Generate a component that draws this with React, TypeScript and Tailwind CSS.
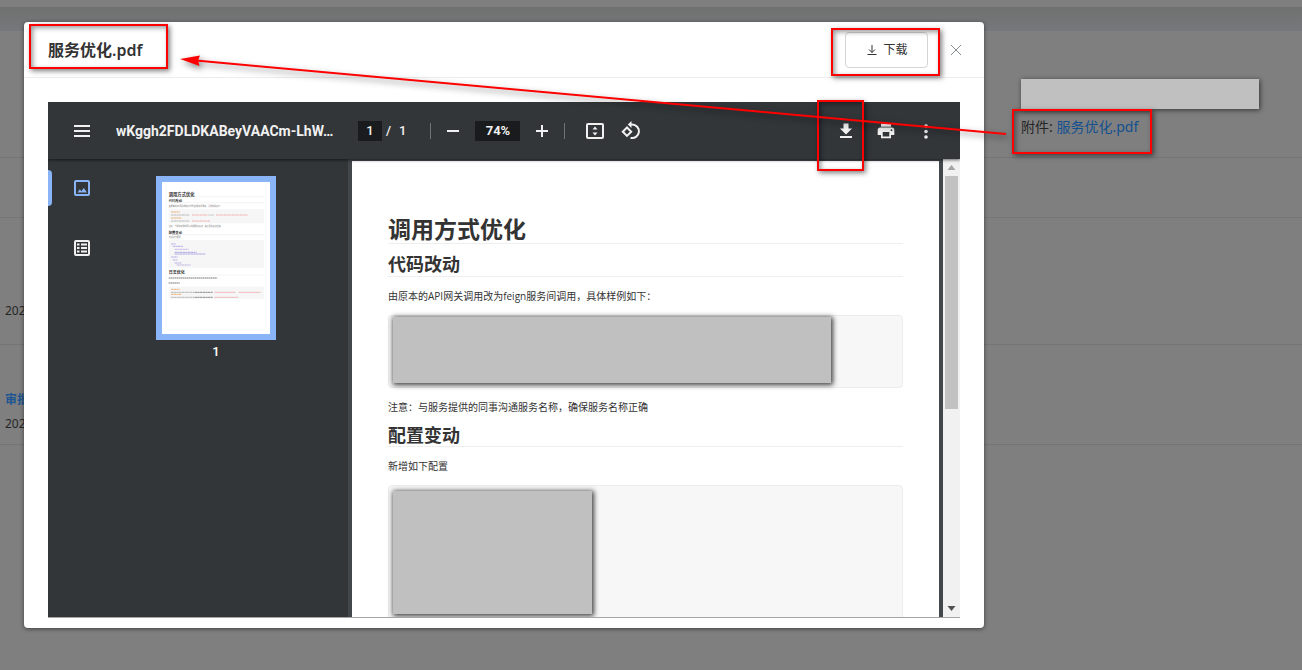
import { ReactNode } from 'react';

const UI_FONT = 'font-["Noto_Sans","Noto_Sans_CJK_SC",sans-serif]';

// 缩略图里的代码行: x, y, 宽度, 颜色
const thumbCode = [
  [27, 90, 26, '#e8b27c'],
  [27, 99, 56, '#b9b9b9'],
  [90, 99, 46, '#efb3b3'],
  [139, 99, 18, '#c5c5c5'],
  [162, 99, 96, '#efb3b3'],
  [27, 108, 32, '#e8b27c'],
  [27, 117, 56, '#b9b9b9'],
  [90, 117, 54, '#efb3b3'],
  [27, 186, 14, '#b7ade6'],
  [32, 193, 32, '#b7ade6'],
  [38, 202, 42, '#c9b9e6'],
  [38, 211, 66, '#ada5e2'],
  [38, 216, 92, '#ada5e2'],
  [27, 225, 20, '#b7ade6'],
  [32, 234, 14, '#b7ade6'],
  [38, 243, 20, '#b7ade6'],
  [44, 249, 42, '#c0b6e2'],
  [27, 322, 26, '#e8b27c'],
  [27, 331, 70, '#b9b9b9'],
  [98, 331, 54, '#8d8d8d'],
  [158, 331, 62, '#efb3b3'],
  [230, 331, 66, '#efb3b3'],
  [27, 337, 32, '#e8b27c'],
  [27, 346, 70, '#b9b9b9'],
  [98, 346, 54, '#8d8d8d'],
  [158, 346, 70, '#efb3b3'],
] as const;

function Thumbnail() {
  return (
    <svg viewBox="0 0 324 456" className='block w-full bg-white font-["Noto_Sans_CJK_SC",sans-serif]' aria-hidden="true">
      <g fill="#f6f6f6">
        <rect x="20" y="81" width="286" height="43" />
        <rect x="20" y="174" width="286" height="84" />
        <rect x="20" y="314" width="286" height="37" />
      </g>
      <g stroke="#eeeeee" strokeWidth="2">
        <path d="M20 44H306M20 62H306M20 158H306M20 279H306" />
      </g>
      <g fill="#333" fontWeight="700">
        <text x="20" y="41" fontSize="13">调用方式优化</text>
        <text x="20" y="59" fontSize="10">代码改动</text>
        <text x="20" y="155" fontSize="10">配置变动</text>
        <text x="20" y="275" fontSize="12">日志优化</text>
      </g>
      <g fill="#777" fontSize="6">
        <text x="20" y="74">由原本的API网关调用改为feign服务间调用，具体样例如下：</text>
        <text x="20" y="136">注意：与服务提供的同事沟通服务名称，确保服务名称正确</text>
        <text x="20" y="167">新增如下配置</text>
      </g>
      <g stroke="#a8a8a8" strokeWidth="4" strokeDasharray="5 1">
        <path d="M20 288H166M20 303H53" />
      </g>
      {thumbCode.map(([x, y, w, color], index) => (
        <path key={index} d={`M${x} ${y}h${w}`} stroke={color} strokeWidth="3" strokeDasharray="7 1" />
      ))}
    </svg>
  );
}

function ToolButton({ label, children }: { label: string; children: ReactNode }) {
  return (
    <button aria-label={label} className="flex size-5 items-center justify-center text-[#f1f1f1]">
      {children}
    </button>
  );
}

function Toolbar() {
  return (
    <div className='relative z-10 flex h-[57px] shrink-0 items-center bg-[#323639] px-6 font-["Roboto",sans-serif] text-[13px] font-medium text-[#f1f1f1] shadow-[0_1px_3px_rgba(0,0,0,0.6)]'>
      <ToolButton label="菜单">
        <svg width="20" height="20" viewBox="0 0 20 20" fill="currentColor" aria-hidden="true">
          <path d="M2 4h16v2H2zM2 9h16v2H2zM2 14h16v2H2z" />
        </svg>
      </ToolButton>
      <span className="ml-6 w-[218px] truncate text-sm font-bold">wKggh2FDLDKABeyVAACm-LhW...</span>
      <div className="ml-6 flex items-center">
        <input aria-label="页码" defaultValue="1" className="h-5 w-6 bg-[#191b1c] text-center" />
        <span className="ml-1">/</span>
        <span className="ml-2">1</span>
      </div>
      <span className="ml-6 h-4 w-px bg-[#707376]" />
      <div className="ml-3 flex items-center gap-3">
        <ToolButton label="缩小">
          <svg width="20" height="20" viewBox="0 0 20 20" fill="currentColor" aria-hidden="true">
            <path d="M4 9h12v2H4z" />
          </svg>
        </ToolButton>
        <input aria-label="缩放比例" defaultValue="74%" className="h-5 w-[45px] bg-[#191b1c] text-center font-bold" />
        <ToolButton label="放大">
          <svg width="20" height="20" viewBox="0 0 20 20" fill="currentColor" aria-hidden="true">
            <path d="M4 9h5V4h2v5h5v2h-5v5H9v-5H4z" />
          </svg>
        </ToolButton>
      </div>
      <span className="ml-3 h-4 w-px bg-[#707376]" />
      <div className="ml-5 flex items-center gap-4">
        <ToolButton label="适合页面大小">
          <svg width="20" height="20" viewBox="0 0 20 20" aria-hidden="true">
            <rect x="2" y="3" width="16" height="14" rx="1" fill="none" stroke="currentColor" strokeWidth="2" />
            <path d="M10 5.500 12.500 8.500h-5zM10 14.500l2.500-3h-5z" fill="currentColor" />
          </svg>
        </ToolButton>
        <ToolButton label="逆时针旋转">
          <svg width="20" height="20" viewBox="0 0 20 20" fill="none" stroke="currentColor" strokeWidth="2" aria-hidden="true">
            <path d="m6 6.500 4.200 4.200L6 14.900l-4.200-4.200z" />
            <path d="M9 3.500h2a6.800 6.800 0 1 1-1.500 13.400" />
            <path d="M10.500 0v7L6.800 3.500z" fill="currentColor" stroke="none" />
          </svg>
        </ToolButton>
      </div>
      <div className="ml-auto flex items-center gap-5">
        <ToolButton label="下载">
          <svg width="20" height="20" viewBox="0 0 20 20" fill="currentColor" aria-hidden="true">
            <path d="M7.500 2.500h5v5H16l-6 6-6-6h3.500zM4 15h12v2H4z" />
          </svg>
        </ToolButton>
        <ToolButton label="打印">
          <svg width="20" height="20" viewBox="0 0 20 20" fill="currentColor" aria-hidden="true">
            <path d="M5 2.500h10v3.200H5z" />
            <path fillRule="evenodd" d="M4.200 6.500h11.600A2.500 2.500 0 0 1 18.300 9v5H15v3.300H5V14H1.700V9a2.500 2.500 0 0 1 2.500-2.500zM6.700 11v4.600h6.600V11zM15.500 8.300a.9.9 0 1 0 0 1.800.9.9 0 0 0 0-1.800z" />
          </svg>
        </ToolButton>
        <ToolButton label="更多">
          <svg width="20" height="20" viewBox="0 0 20 20" fill="currentColor" aria-hidden="true">
            <circle cx="10" cy="5" r="1.800" />
            <circle cx="10" cy="10.500" r="1.800" />
            <circle cx="10" cy="16" r="1.800" />
          </svg>
        </ToolButton>
      </div>
    </div>
  );
}

function Sidebar() {
  return (
    <aside className="flex w-[300px] shrink-0 bg-[#323639]">
      <div className="flex w-[68px] flex-col gap-6 pt-[11px]">
        <button aria-label="缩略图" className="flex h-9 items-center text-[#8ab4f8]">
          <span className="h-9 w-1 rounded-r bg-[#8ab4f8]" />
          <svg className="ml-5" width="20" height="20" viewBox="0 0 20 20" aria-hidden="true">
            <rect x="3" y="3" width="14" height="14" rx="1" fill="none" stroke="currentColor" strokeWidth="2" />
            <path d="m5.500 14.500 2.300-3.200 1.600 1.900 2.400-3.200 3.200 4.500z" fill="currentColor" />
          </svg>
        </button>
        <button aria-label="文档大纲" className="flex h-9 items-center pl-6 text-[#f1f1f1]">
          <svg width="20" height="20" viewBox="0 0 20 20" aria-hidden="true">
            <rect x="3" y="3" width="14" height="14" rx="1" fill="none" stroke="currentColor" strokeWidth="2" />
            <path d="M5 5.500h2.500v2H5zM5 9h2.500v2H5zM5 12.500h2.500v2H5zM9 5.500h6v2H9zM9 9h6v2H9zM9 12.500h6v2H9z" fill="currentColor" />
          </svg>
        </button>
      </div>
      <div className="ml-10 flex w-[120px] flex-col items-center pt-[17px]">
        <button aria-label="第 1 页" className="w-full border-6 border-[#8ab4f8]">
          <Thumbnail />
        </button>
        <span className='mt-1 font-["Roboto",sans-serif] text-[13px] font-medium leading-4 text-white'>1</span>
      </div>
    </aside>
  );
}

function CodeBlock({ className, children }: { className: string; children: ReactNode }) {
  return <div className={`rounded-sm border border-[#ececec] bg-[#f7f7f7] px-1 ${className}`}>{children}</div>;
}

function PdfPage() {
  return (
    <article className='min-w-0 flex-1 bg-white px-9 pt-[54px] font-["Open_Sans","Noto_Sans_CJK_SC",sans-serif] text-[10px] leading-4 text-[#333]'>
      <h1 className="h-[29px] border-b border-[#eee] text-[23px] leading-7 font-bold">调用方式优化</h1>
      <h2 className="mt-2 h-[25px] border-b border-[#eee] text-lg leading-6 font-bold">代码改动</h2>
      <p className="mt-[11px]">由原本的API网关调用改为feign服务间调用，具体样例如下：</p>
      <CodeBlock className="mt-[11px] h-[73px] pt-px">
        <div className="h-[66px] w-[438px] bg-[#c0c0c0] shadow-[1px_1px_5px_1px_rgba(0,0,0,0.75)]" />
      </CodeBlock>
      <p className="mt-[11px]">注意：与服务提供的同事沟通服务名称，确保服务名称正确</p>
      <h2 className="mt-2 h-6 border-b border-[#eee] text-lg leading-6 font-bold">配置变动</h2>
      <p className="mt-[11px]">新增如下配置</p>
      <CodeBlock className="mt-[11px] h-[180px] pt-[5px]">
        <div className="h-[123px] w-[199px] bg-[#c0c0c0] shadow-[1px_1px_5px_1px_rgba(0,0,0,0.75)]" />
      </CodeBlock>
    </article>
  );
}

function Scrollbar() {
  return (
    <div className="flex w-[17px] shrink-0 flex-col items-center bg-[#f1f1f1]">
      <svg width="17" height="17" viewBox="0 0 17 17" aria-hidden="true">
        <path d="M8.500 6 12.500 11h-8z" fill="#a3a3a3" />
      </svg>
      <div className="h-[233px] w-[13px] bg-[#c1c1c1]" />
      <svg className="mt-auto" width="17" height="17" viewBox="0 0 17 17" aria-hidden="true">
        <path d="M8.500 11 12.500 6h-8z" fill="#505050" />
      </svg>
    </div>
  );
}

function PreviewModal() {
  return (
    <section role="dialog" aria-label="服务优化.pdf" className="absolute top-[22px] left-6 w-[960px] rounded bg-white pb-[10px] shadow-[0_1px_4px_rgba(0,0,0,0.5)]">
      <header className="flex h-14 items-center border-b border-[#ececec] pr-[22px] pl-6">
        <h3 className="text-base font-semibold text-[#333]">服务优化.pdf</h3>
        <button className="ml-auto flex h-9 w-[83px] items-center justify-center gap-1 rounded border border-[#d5d5d5] text-xs text-[#333]">
          <svg width="14" height="14" viewBox="0 0 14 14" fill="none" stroke="currentColor" aria-hidden="true">
            <path d="M7 2v7.500M4 6.500l3 3 3-3M2.500 11.500h9" />
          </svg>
          下载
        </button>
        <button aria-label="关闭" className="ml-[22px] text-[#858b91]">
          <svg width="12" height="12" viewBox="0 0 12 12" stroke="currentColor" aria-hidden="true">
            <path d="m1 1 10 10M11 1 1 11" />
          </svg>
        </button>
      </header>
      <div className="mx-6 mt-6 flex h-[516px] flex-col overflow-hidden border-b border-[#a5a5a5]">
        <Toolbar />
        <div className="flex min-h-0 flex-1 bg-[#42474b]">
          <Sidebar />
          <div className="flex min-w-0 flex-1 overflow-hidden px-1 pt-0.5">
            <PdfPage />
          </div>
          <Scrollbar />
        </div>
      </div>
    </section>
  );
}

function Annotations() {
  const box = 'absolute border-2 border-[#ff0000] shadow-[2px_2px_5px_rgba(0,0,0,0.5),inset_2px_2px_5px_rgba(0,0,0,0.4)]';
  return (
    <div className="pointer-events-none absolute inset-0 z-20" aria-hidden="true">
      <div className={`${box} top-6 left-[29px] h-[45px] w-[139px]`} />
      <div className={`${box} top-7 left-[831px] h-12 w-[109px]`} />
      <div className={`${box} top-[100px] left-[817px] h-[71px] w-[47px]`} />
      <div className={`${box} top-[109px] left-[1012px] h-[45px] w-[140px]`} />
      <svg className="absolute top-0 left-0 drop-shadow-[2px_3px_3px_rgba(0,0,0,0.5)]" width="1020" height="150" viewBox="0 0 1020 150">
        <path d="M196 60.500 1006 134" stroke="#ff0000" strokeWidth="2" />
        <path d="m180 59 20-3.500-2 5 1.500 5.500z" fill="#ff0000" />
      </svg>
    </div>
  );
}

export default function App() {
  return (
    <div className={`relative min-h-screen overflow-hidden bg-[#7f7f7f] text-[#262626] ${UI_FONT}`}>
      {/* 被遮罩的底层页面 */}
      <div className="h-[7px]" />
      <div className="h-6 bg-linear-to-b from-[#707070] to-[#76787b]" />
      <main className="text-xs">
        <div className="flex h-[127px] justify-end border-b border-[#747577] pt-12">
          <div className="w-[281px]">
            <div className="h-[30px] w-[238px] bg-[#c0c0c0] shadow-[1px_1px_5px_rgba(0,0,0,0.6)]" />
            <p className="mt-2 text-sm">
              附件: <a href="#" className="text-[#12508f]">服务优化.pdf</a>
            </p>
          </div>
        </div>
        <div className="h-[60px] border-b border-[#747577]" />
        <div className="flex h-[127px] items-end border-b border-[#747577] pb-[25px] pl-[5px]">202</div>
        <div className="flex h-[100px] flex-col justify-end gap-2 border-b border-[#747577] pb-3 pl-[5px]">
          <a href="#" className="font-bold text-[#1c5591]">审批</a>
          <span>202</span>
        </div>
      </main>

      <PreviewModal />
      <Annotations />
    </div>
  );
}
